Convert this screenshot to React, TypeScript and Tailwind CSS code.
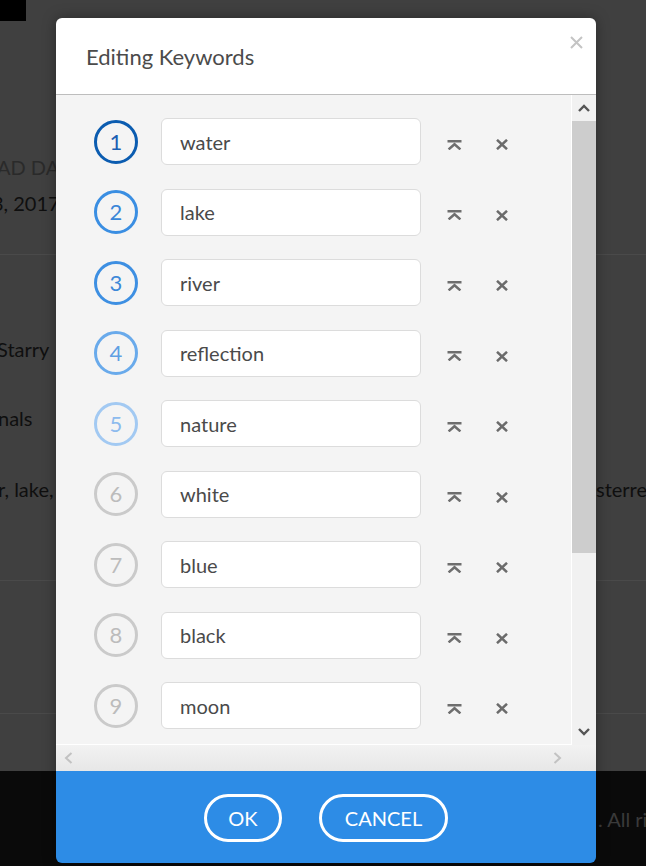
import React from "react";

const keywords = ["water", "lake", "river", "reflection", "nature", "white", "blue", "black", "moon", "night"];

const circleClasses = [
  "border-[#0b5cb0] text-[#1a5fb2]",
  "border-[#3a8ee2] text-[#3a86d8]",
  "border-[#3d8fe2] text-[#3d88d8]",
  "border-[#69aaeb] text-[#5f9fe3]",
  "border-[#a2c9f2] text-[#8dbbee]",
  "border-[#cacaca] text-[#bcbcbc]",
  "border-[#cacaca] text-[#bcbcbc]",
  "border-[#cacaca] text-[#bcbcbc]",
  "border-[#cacaca] text-[#bcbcbc]",
  "border-[#cacaca] text-[#bcbcbc]",
];

function MoveTopIcon() {
  return (
    <svg width="15" height="10" viewBox="0 0 15 10" fill="none" stroke="#6e6e6e" strokeWidth="2.5">
      <path d="M0.5 1.25H14.5" />
      <path d="M1.6 9.4L7.5 4.2L13.4 9.4" />
    </svg>
  );
}

function RemoveIcon() {
  return (
    <svg width="12" height="11" viewBox="0 0 12 11" fill="none" stroke="#6b6b6b" strokeWidth="2.5">
      <path d="M1 0.8L11 10.2M11 0.8L1 10.2" />
    </svg>
  );
}

function Chevron({ dir, color }: { dir: "up" | "down" | "left" | "right"; color: string }) {
  if (dir === "up")
    return (
      <svg width="12" height="8" viewBox="0 0 12 8" fill="none" stroke={color} strokeWidth="2.4">
        <path d="M1 7L6 2L11 7" />
      </svg>
    );
  if (dir === "down")
    return (
      <svg width="12" height="8" viewBox="0 0 12 8" fill="none" stroke={color} strokeWidth="2.4">
        <path d="M1 1L6 6L11 1" />
      </svg>
    );
  if (dir === "left")
    return (
      <svg width="9" height="12" viewBox="0 0 9 12" fill="none" stroke={color} strokeWidth="2">
        <path d="M7.5 1L2 6L7.5 11" />
      </svg>
    );
  return (
    <svg width="9" height="12" viewBox="0 0 9 12" fill="none" stroke={color} strokeWidth="2">
      <path d="M1.5 1L7 6L1.5 11" />
    </svg>
  );
}

function Row({ n, word }: { n: number; word: string }) {
  return (
    <div className="flex items-center h-[47px] shrink-0">
      <div
        className={`w-[44px] h-[44px] rounded-full border-[3px] flex items-center justify-center text-[22px] font-normal leading-none ${circleClasses[n - 1]}`}
      >
        {n}
      </div>
      <div className="ml-[23px] w-[260px] h-[47px] bg-white border border-[#dcdcdc] rounded-[6px] flex items-center pl-[18px] text-[20px] text-[#4a4a4a]">
        {word}
      </div>
      <div className="ml-[26px] pt-[6px] flex items-center">
        <MoveTopIcon />
      </div>
      <div className="ml-[34px] pt-[6px] flex items-center">
        <RemoveIcon />
      </div>
    </div>
  );
}

export default function App() {
  return (
    <div className="relative w-[646px] h-[866px] overflow-hidden bg-[#404040] font-['Lato','Open_Sans',sans-serif]">
      {/* Backdrop page */}
      <div className="flex flex-col h-full">
        <div className="w-[26px] h-[21px] bg-black shrink-0" />
        <div className="mt-[132px] h-[28px] text-[20px] leading-[28px] text-[#2a2a2a] whitespace-nowrap ml-[-3px]">
          AD DATE
        </div>
        <div className="mt-[8px] h-[28px] text-[20px] leading-[28px] text-[#0f0f0f] whitespace-nowrap ml-[-8px]">
          3, 2017
        </div>
        <div className="mt-[37px] h-px bg-[#4a4a4a] shrink-0" />
        <div className="mt-[80px] h-[28px] text-[20px] leading-[28px] text-[#0f0f0f] whitespace-nowrap ml-[-3px]">
          Starry
        </div>
        <div className="mt-[41px] h-[28px] text-[20px] leading-[28px] text-[#0f0f0f] whitespace-nowrap ml-[-2px]">
          nals
        </div>
        <div className="mt-[43px] h-[28px] flex text-[20px] leading-[28px] text-[#0f0f0f] whitespace-nowrap">
          <div className="w-[596px] shrink-0 ml-[-2px]">r, lake, river</div>
          <div className="shrink-0 ml-[2px]">sterreich</div>
        </div>
        <div className="mt-[77px] h-px bg-[#4a4a4a] shrink-0" />
        <div className="mt-[132px] h-px bg-[#4a4a4a] shrink-0" />
        <div className="mt-[57px] flex-1 bg-[#0a0a0a] flex pt-[34px] text-[20px] leading-[28px] text-[#3a3a3a] whitespace-nowrap">
          <div className="w-[598px] shrink-0" />
          <div className="shrink-0">. All rights reserved.</div>
        </div>
      </div>

      {/* Modal */}
      <div className="absolute left-[56px] top-[18px] w-[540px] h-[845px] flex flex-col shadow-[0_0_14px_rgba(0,0,0,0.35)] rounded-[6px]">
        <div className="relative h-[77px] shrink-0 bg-white rounded-t-[6px] border-b border-[#bdbdbd] pl-[30px] pt-[25px]">
          <div className="text-[22px] leading-[28px] text-[#4b4b4b]">Editing Keywords</div>
          <div className="absolute right-[13px] top-[18px]">
            <svg width="13" height="13" viewBox="0 0 13 13" fill="none" stroke="#c4c4c4" strokeWidth="2">
              <path d="M1 1L12 12M12 1L1 12" />
            </svg>
          </div>
        </div>

        <div className="flex h-[650px] shrink-0">
          <div className="w-[516px] h-[650px] bg-[#f4f4f4] border-r border-b border-white overflow-hidden">
            <div className="flex flex-col gap-[23.5px] pt-[23px] pl-[38px]">
              {keywords.map((w, i) => (
                <Row key={w} n={i + 1} word={w} />
              ))}
            </div>
          </div>
          <div className="w-[24px] h-[650px] flex flex-col bg-[#f1f1f1]">
            <div className="h-[26px] flex items-center justify-center">
              <Chevron dir="up" color="#555555" />
            </div>
            <div className="h-[432px] bg-[#cdcdcd]" />
            <div className="flex-1" />
            <div className="h-[26px] flex items-center justify-center">
              <Chevron dir="down" color="#555555" />
            </div>
          </div>
        </div>

        <div className="h-[26px] shrink-0 flex bg-linear-to-b from-[#f2f2f2] to-[#e7e7e7]">
          <div className="w-[516px] flex items-center justify-between pl-[8px] pr-[10px]">
            <Chevron dir="left" color="#c2c2c2" />
            <Chevron dir="right" color="#c2c2c2" />
          </div>
        </div>

        <div className="flex-1 bg-[#2d8ce6] rounded-b-[6px] flex items-center justify-center gap-[37px] pt-[1px]">
          <div className="w-[78px] h-[48px] rounded-full border-[3px] border-white flex items-center justify-center text-[20px] text-white">
            OK
          </div>
          <div className="w-[129px] h-[48px] rounded-full border-[3px] border-white flex items-center justify-center text-[20px] text-white">
            CANCEL
          </div>
        </div>
      </div>
    </div>
  );
}
